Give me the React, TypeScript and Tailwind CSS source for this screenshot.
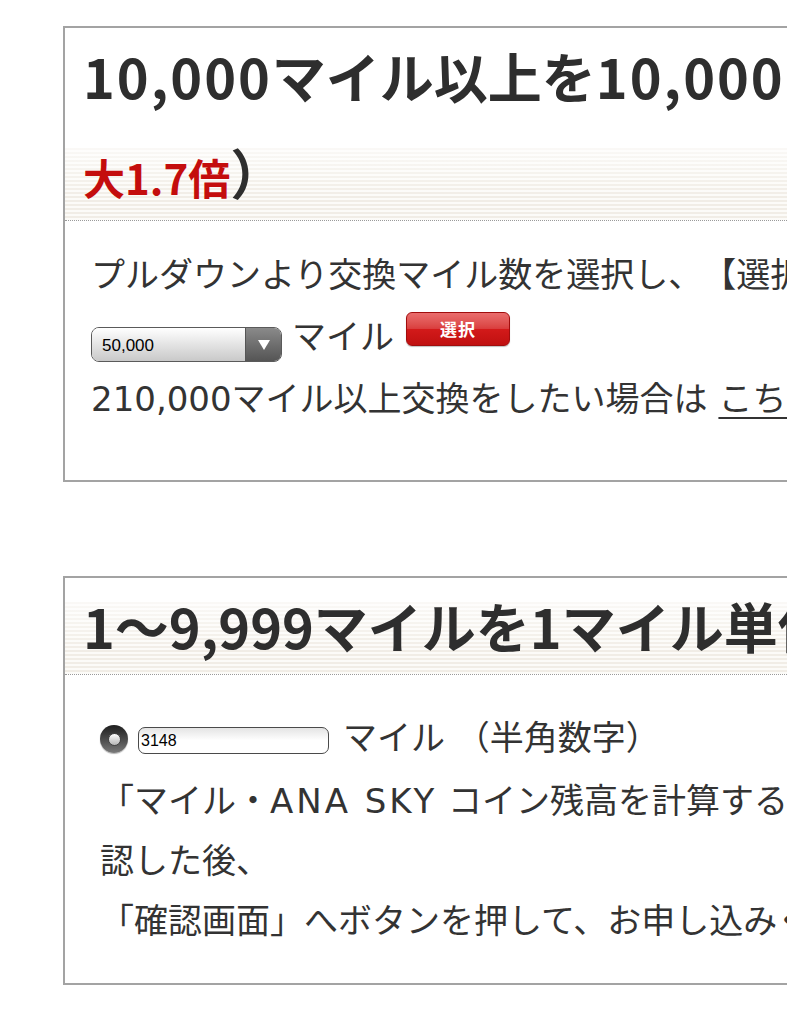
import React from "react";

const jp = "font-['Noto_Sans_CJK_JP','Noto_Sans',sans-serif]";
const body = "font-['DejaVu_Sans','Noto_Sans_CJK_JP',sans-serif]";
const latin = "font-['Liberation_Sans',Arial,sans-serif]";

const headerBg =
  "bg-[image:linear-gradient(to_bottom,rgba(255,255,255,0.65),rgba(255,255,255,0)_70%),repeating-linear-gradient(to_bottom,#f1ede6_0px,#f1ede6_2px,#fcfbf8_2px,#fcfbf8_4px)] bg-no-repeat bg-bottom bg-size-[100%_72px]";

function PullDown({ value }: { value: string }) {
  return (
    <div className="mt-[21px] flex h-[35px] w-[191px] overflow-hidden rounded-[8px] border-[1.5px] border-[#5a5a5a]">
      <div
        className={`flex flex-1 items-center bg-gradient-to-b from-white to-[#c9c9c9] pl-[10px] pt-[2px] text-[17px] text-black ${latin}`}
      >
        {value}
      </div>
      <div className="flex w-[36px] items-center justify-center border-l border-[#555] bg-gradient-to-b from-[#8a8a8a] to-[#555]">
        <svg width="14" height="12" viewBox="0 0 14 12">
          <path d="M1 1 L13 1 L7 11 Z" fill="#fff" />
        </svg>
      </div>
    </div>
  );
}

function RedButton({ label }: { label: string }) {
  return (
    <button className="relative mt-[6px] flex h-[34px] w-[104px] items-center justify-center overflow-hidden rounded-[6px] border border-[#a10d0d] bg-gradient-to-b from-[#e65353] via-[#d31a1a] to-[#c01010] shadow-[0_1px_1px_rgba(0,0,0,0.25)]">
      <span className="absolute inset-x-0 top-0 h-1/2 bg-white/15" />
      <span className={`relative text-[17px] font-bold tracking-[1px] text-white ${jp}`}>{label}</span>
    </button>
  );
}

function Radio() {
  return (
    <div className="mt-[17px] flex h-[28px] w-[28px] items-center justify-center rounded-full bg-gradient-to-b from-[#1f1f1f] to-[#7a7a7a] shadow-[0_1px_1px_rgba(0,0,0,0.3)]">
      <div className="h-[13px] w-[13px] rounded-full border border-[#444] bg-gradient-to-b from-white to-[#b5b5b5]" />
    </div>
  );
}

function MileInput({ value }: { value: string }) {
  return (
    <div
      className={`mt-[19px] flex h-[27px] w-[191px] items-center rounded-[7px] border-[1.5px] border-[#4a4a4a] bg-gradient-to-b from-[#e4e4e4] via-white to-white pl-[2px] pt-[1px] text-[16px] text-black ${latin}`}
    >
      {value}
    </div>
  );
}

export default function App() {
  return (
    <div
      className={`min-h-[1024px] w-[787px] overflow-hidden bg-white pt-[26px] text-[#333] [text-spacing-trim:space-all] ${jp}`}
    >
      {/* 10,000マイル単位 */}
      <section className="ml-[63px] w-[1500px] border-2 border-[#a3a3a3]">
        <h2
          className={`border-b border-dotted border-[#9a9a9a] pl-[18px] text-[54px] font-bold leading-[96px] whitespace-nowrap text-[#2e2e2e] ${headerBg}`}
        >
          <span className="tracking-[2px]">10,000</span>マイル以上を<span className="tracking-[2px]">10,000</span>
          マイル単位で交換（
          <span className="text-[42px] leading-none text-[#c40d0d]">最</span>
          <br />
          <span className="text-[42px] leading-none text-[#c40d0d]">大1.7倍</span>）
        </h2>
        <div className={`pb-[50px] pl-[26px] pt-[23px] text-[34px] leading-[62px] whitespace-nowrap ${body}`}>
          <p>プルダウンより交換マイル数を選択し、【選択】ボタンを押してください。</p>
          <div className="flex h-[62px] items-start">
            <PullDown value="50,000" />
            <span className="ml-[10px]">マイル</span>
            <span className="ml-[12px]">
              <RedButton label="選択" />
            </span>
          </div>
          <p>
            210,000マイル以上交換をしたい場合は{" "}
            <a href="#" className="underline underline-offset-[6px] decoration-[2px]">
              こちら
            </a>
          </p>
        </div>
      </section>

      {/* 1マイル単位 */}
      <section className="ml-[63px] mt-[94px] w-[1500px] border-2 border-[#a3a3a3]">
        <h2
          className={`border-b border-dotted border-[#9a9a9a] pl-[18px] text-[54px] font-bold leading-[96px] whitespace-nowrap text-[#2e2e2e] ${headerBg}`}
        >
          1〜9,999マイルを1マイル単位で交換
        </h2>
        <div className={`pb-[32px] pl-[35px] pt-[33px] text-[34px] leading-[60px] whitespace-nowrap ${body}`}>
          <div className="flex h-[60px] items-start">
            <Radio />
            <span className="ml-[10px]">
              <MileInput value="3148" />
            </span>
            <span className="ml-[14px]">マイル （半角数字）</span>
          </div>
          <p className="mt-[3px]">
            「マイル・<span className="tracking-[3px]">ANA SKY</span> コイン残高を計算する」ボタンでご確
            <br />
            認した後、
            <br />
            「確認画面」へボタンを押して、お申し込みください。
          </p>
        </div>
      </section>
    </div>
  );
}
